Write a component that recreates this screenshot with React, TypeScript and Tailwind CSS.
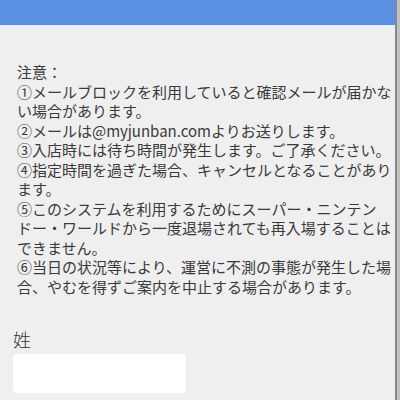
export default function App() {
  // visual lines, wrapped as in the original page
  const lines = [
    "注意：",
    "①メールブロックを利用していると確認メールが届かな",
    "い場合があります。",
    "②メールは@myjunban.comよりお送りします。",
    "③入店時には待ち時間が発生します。ご了承ください。",
    "④指定時間を過ぎた場合、キャンセルとなることがあり",
    "ます。",
    "⑤このシステムを利用するためにスーパー・ニンテン",
    "ドー・ワールドから一度退場されても再入場することは",
    "できません。",
    "⑥当日の状況等により、運営に不測の事態が発生した場",
    "合、やむを得ずご案内を中止する場合があります。",
  ]

  return (
    <div
      className="flex w-[400px] h-[400px] overflow-hidden bg-[#efefef]"
      style={{ fontFamily: '"Noto Sans CJK JP", "Noto Sans", sans-serif' }}
    >
      {/* Main */}
      <div className="flex flex-col w-[395px] shrink-0">
        <header className="h-[25px] bg-[#5a8fe1] shrink-0" />

        {/* Notice */}
        <div className="pt-[37px] pl-[17px] text-[15px] leading-[19.5px] text-[#3a3a3a]">
          {lines.map((l) => (
            <div key={l} className="whitespace-nowrap">
              {l}
            </div>
          ))}
        </div>

        {/* Form */}
        <div className="pt-[31px] pl-[13px]">
          <label className="block text-[18px] leading-[24px] text-[#333] font-light">姓</label>
          <input
            type="text"
            className="mt-[3px] block w-[173px] h-[39px] rounded-[4px] bg-white outline-none border-0"
          />
        </div>
      </div>

      {/* Scrollbar edge */}
      <div className="flex w-[5px] shrink-0">
        <div className="w-[2px] bg-[#8a8a8a]" />
        <div className="w-[3px] bg-[#c2c2c2]" />
      </div>
    </div>
  )
}
